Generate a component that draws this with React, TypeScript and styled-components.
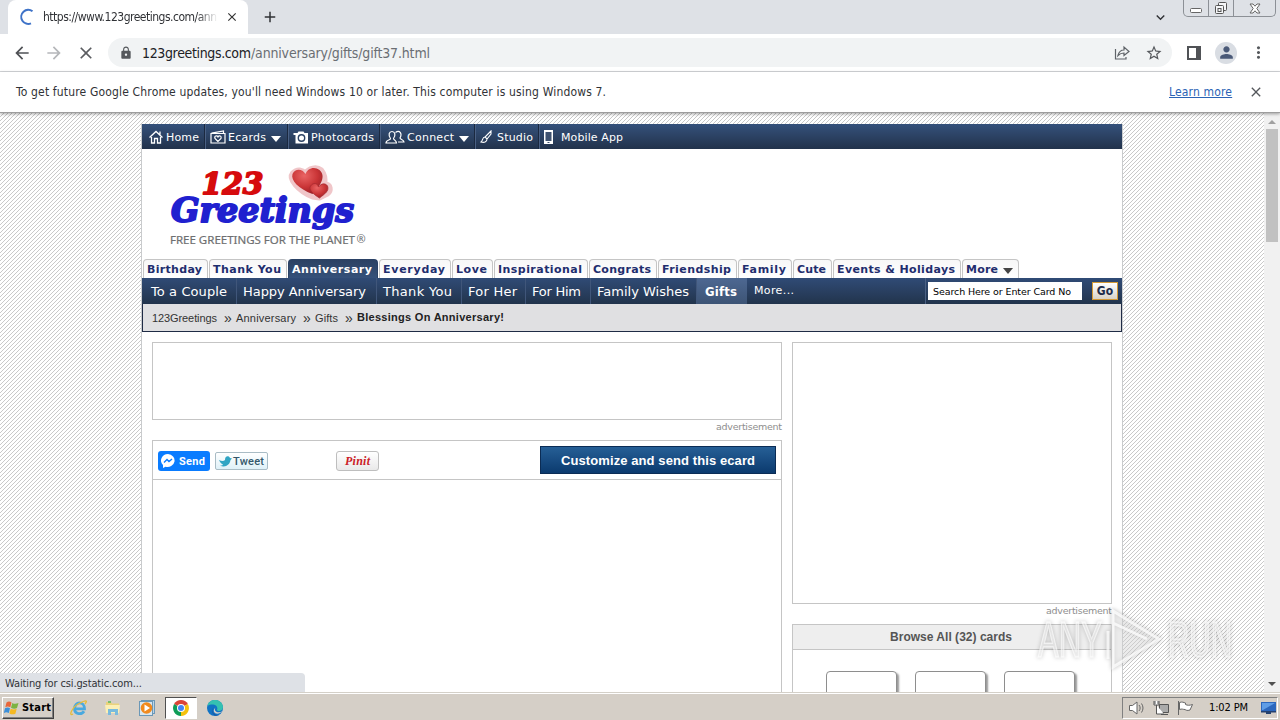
import React, {useLayoutEffect, useRef, useState} from "react";
import styled, {createGlobalStyle} from "styled-components";
import {
    MdAdd,
    MdArrowBack,
    MdArrowForward,
    MdClose,
    MdExpandMore,
    MdLock,
    MdMoreVert,
    MdPerson,
    MdStarBorder,
} from "react-icons/md";

const tahoma = `Tahoma, "DejaVu Sans Condensed", "DejaVu Sans", sans-serif`;
const verdana = `Verdana, "DejaVu Sans", sans-serif`;
const arial = `"Liberation Sans", Arial, sans-serif`;

// spreads the letters so that the text takes exactly the given width
const Fit: React.FC<{width: number; children: string; className?: string}> = ({width, children, className}) => {
    const ref = useRef<HTMLSpanElement>(null);
    const [spacing, setSpacing] = useState(0);

    useLayoutEffect(() => {
        if (!ref.current) return;
        const natural = ref.current.getBoundingClientRect().width - spacing * children.length;
        setSpacing((width - natural) / (children.length - 1));
    }, [width, children]);

    return (
        <FitBox $width={width} className={className}>
            <span ref={ref} style={{letterSpacing: spacing}}>{children}</span>
        </FitBox>
    );
};

const topLinks = [
    {label: "Home", icon: "home", iconWidth: 17, text: 33, width: 62, arrow: false},
    {label: "Ecards", icon: "card", iconWidth: 18, text: 38, width: 83, arrow: true},
    {label: "Photocards", icon: "camera", iconWidth: 18, text: 63, width: 92, arrow: false},
    {label: "Connect", icon: "people", iconWidth: 22, text: 47, width: 95, arrow: true},
    {label: "Studio", icon: "brush", iconWidth: 17, text: 36, width: 64, arrow: false},
    {label: "Mobile App", icon: "phone", iconWidth: 18, text: 62, width: 95, arrow: false},
];

const tabs = [
    {label: "Birthday", text: 55, width: 65},
    {label: "Thank You", text: 68, width: 78},
    {label: "Anniversary", text: 80, width: 90},
    {label: "Everyday", text: 62, width: 72},
    {label: "Love", text: 31, width: 41},
    {label: "Inspirational", text: 84, width: 94},
    {label: "Congrats", text: 58, width: 68},
    {label: "Friendship", text: 69, width: 79},
    {label: "Family", text: 44, width: 54},
    {label: "Cute", text: 29, width: 39},
    {label: "Events & Holidays", text: 118, width: 128},
];

const subLinks = [
    {label: "To a Couple", text: 76, width: 95, pad: 9},
    {label: "Happy Anniversary", text: 123, width: 140, pad: 6},
    {label: "Thank You", text: 69, width: 85, pad: 6},
    {label: "For Her", text: 49, width: 64, pad: 6},
    {label: "For Him", text: 49, width: 65, pad: 6},
    {label: "Family Wishes", text: 92, width: 106, pad: 6},
];

const NavIcon: React.FC<{name: string}> = ({name}) => {
    switch (name) {
        case "home":
            return (
                <svg width="14" height="14" viewBox="0 0 14 14" fill="none" stroke="#fff" strokeWidth="1.3">
                    <path d="M.5 7.500 7 1.500 13.500 7.500M2.500 7V13h3V8.500h3V13h3V7M11 4.500V1.500"/>
                </svg>
            );
        case "card":
            return (
                <svg width="16" height="14" viewBox="0 0 16 14" fill="none" stroke="#fff" strokeWidth="1.2">
                    <path d="M1 3.500h14V13H1zM1.500 3.200 13.500 1v2.200"/>
                    <path d="M8 11.500 5 8.500c-1-2.500 2-3.500 3-1.500 1-2 4-1 3 1.500z"/>
                </svg>
            );
        case "camera":
            return (
                <svg width="16" height="13" viewBox="0 0 16 13">
                    <path fill="#fff" d="M.5 2h4l1-1.500h5L11.500 2h3.500v10.500H2.500V4h-2z"/>
                    <circle cx="8.500" cy="7" r="3.200" fill="#fff" stroke="#2c4365" strokeWidth="1.400"/>
                </svg>
            );
        case "people":
            return (
                <svg width="20" height="14" viewBox="0 0 20 14" fill="none" stroke="#fff" strokeWidth="1.2">
                    <path d="M5.500 8.500C3 5 4 1.500 7 1.500s4 3.500 1.500 7c0 1.500 3 1.500 3 4.500H1c0-3.500 4.500-2.500 4.500-4.500z"/>
                    <path d="M10.500 2.500c4-3 7 1 4.500 5.500 0 1.500 4 1.500 4 4h-6"/>
                </svg>
            );
        case "brush":
            return (
                <svg width="13" height="14" viewBox="0 0 13 14" fill="none" stroke="#fff" strokeWidth="1.1">
                    <path d="M11 1 5 7l2 2 4-5zM5 7c-3 0-2 4-4 5 3 1 6 0 6-3"/>
                </svg>
            );
        default:
            return (
                <svg width="11" height="14" viewBox="0 0 11 14">
                    <path fill="#fff" d="M1 0h9v14H1z"/>
                    <path fill="#3f5270" d="M2.500 2h6v9h-6zM4.500 12h2v1h-2z"/>
                </svg>
            );
    }
};

const Logo: React.FC = () => (
    <svg width="240" height="90" viewBox="0 0 240 90">
        <defs>
            <radialGradient id="heart" cx=".4" cy=".3" r=".8">
                <stop offset="0" stopColor="#ea6464"/>
                <stop offset=".55" stopColor="#c93436"/>
                <stop offset="1" stopColor="#8d1b22"/>
            </radialGradient>
        </defs>
        <g fontFamily="DejaVu Serif, serif" fontWeight="bold" fontStyle="italic" strokeLinejoin="round">
            <text x="44.500" y="34.500" fontSize="30" textLength="62" lengthAdjust="spacingAndGlyphs" fill="#d60b0d"
                  stroke="#d60b0d" strokeWidth="1.800">123</text>
            <text x="14" y="62.500" fontSize="34" textLength="183" lengthAdjust="spacingAndGlyphs" fill="#2020cf"
                  stroke="#2020cf" strokeWidth="2">Greetings</text>
        </g>
        <g strokeLinejoin="round" transform="translate(-1.500 0)">
            <path d="M157 38C143 32 132 20 137 14c5-5 10-3 13 0 3-5 11-7 16-3 4 5 4 10 3 14 7 0 7 7 3 10l-8 4z"
                  fill="#f0c6c9" stroke="#f0c6c9" strokeWidth="5"/>
            <path d="M157 35c-14-5-22-14-20-20 3-6 10-5 13 0 2-6 9-8 14-4 7 6 1 16-7 24z" fill="url(#heart)"/>
            <path d="M164 39c-8-5-11-9-9-12 3-4 7-3 8 1 3-4 7-4 9-1 2 5-3 8-8 12z" fill="url(#heart)"
                  stroke="#a92b31" strokeWidth=".8"/>
        </g>
        <g fontFamily="Noto Sans, Open Sans, sans-serif" fill="#6e6f71">
            <text x="13" y="84.500" fontSize="11" textLength="185" lengthAdjust="spacingAndGlyphs" stroke="#6e6f71"
                  strokeWidth=".2">FREE GREETINGS FOR THE PLANET</text>
            <text x="199.500" y="83.500" fontSize="11">®</text>
        </g>
    </svg>
);

const Watermark: React.FC = () => (
    <WatermarkSvg viewBox="0 0 230 80">
        <g fill="#fff" fillOpacity=".45" stroke="#fff" strokeOpacity=".6" strokeWidth="1.5"
           fontFamily="Liberation Sans, sans-serif" fontSize="50">
            <text x="9" y="58" textLength="64" lengthAdjust="spacingAndGlyphs">ANY</text>
            <text x="139" y="58" textLength="64" lengthAdjust="spacingAndGlyphs">RUN</text>
        </g>
        <path d="M84 12v56l46-28zM79 32v28M84 24l34 16" fill="#fff" fillOpacity=".35" stroke="#fff"
              strokeOpacity=".75" strokeWidth="3"/>
    </WatermarkSvg>
);

export default function App() {
    return (
        <Screen>
            <GlobalStyle/>
            <TabStrip>
                <BrowserTab>
                    <svg width="18" height="18" viewBox="0 0 18 18" fill="none" stroke="#3f73c8" strokeWidth="2">
                        <path d="M13.500 3.300A7 7 0 1 0 12 15.300"/>
                    </svg>
                    <TabTitle><Fit width={174}>https://www.123greetings.com/ann</Fit></TabTitle>
                    <MdClose size={14} color="#333"/>
                </BrowserTab>
                <NewTab><MdAdd size={18}/></NewTab>
                <TabSearch><MdExpandMore size={17}/></TabSearch>
                <WindowButtons>
                    <WindowButton $width={24}>
                        <svg width="13" height="6"><rect x=".5" y=".5" width="11" height="4" rx="1" fill="#fff" stroke="#666"/></svg>
                    </WindowButton>
                    <WindowButton $width={25}>
                        <svg width="14" height="13" fill="#f5f6f8" stroke="#555">
                            <rect x="4.5" y=".5" width="8" height="8" rx="1"/>
                            <rect x="1.5" y="3.5" width="8" height="8" rx="1"/>
                            <rect x="4" y="6.5" width="3" height="3"/>
                        </svg>
                    </WindowButton>
                    <WindowButton $width={42}>
                        <svg width="12" height="11" viewBox="0 0 12 11" fill="#fff" stroke="#666">
                            <path d="M1 1h3l2 2.200L8 1h3L7.800 5.500 11 10H8L6 7.800 4 10H1l3.200-4.500z"/>
                        </svg>
                    </WindowButton>
                </WindowButtons>
            </TabStrip>

            <Toolbar>
                <ToolIcon $color="#4f5155" $gap={12}><MdArrowBack size={20}/></ToolIcon>
                <ToolIcon $color="#b5b7ba" $gap={12}><MdArrowForward size={20}/></ToolIcon>
                <ToolIcon $color="#5a5c60" $gap={12}><MdClose size={20}/></ToolIcon>
                <AddressBar>
                    <MdLock size={14} color="#55585c"/>
                    <Url><Fit width={109}>123greetings.com</Fit><UrlPath width={179}>/anniversary/gifts/gift37.html</UrlPath></Url>
                    <svg width="16" height="16" viewBox="0 0 16 16" fill="none" stroke="#5f6368" strokeWidth="1.2">
                        <path d="M1.500 4v10h10.500v-2M4 10.500c1-4 3-5.500 6-5.500V2l5 4.500-5 4V8C7 8 6 8.500 4 10.500z"/>
                    </svg>
                    <MdStarBorder size={18} color="#55585c"/>
                </AddressBar>
                <SidePanel/>
                <Avatar><MdPerson size={19}/></Avatar>
                <MdMoreVert size={19} color="#55585c"/>
            </Toolbar>

            <InfoBar>
                <Fit width={590}>To get future Google Chrome updates, you'll need Windows 10 or later. This computer is using Windows 7.</Fit>
                <LearnMore width={63}>Learn more</LearnMore>
                <MdClose size={16} color="#55585c"/>
            </InfoBar>

            <Viewport>
                <Page>
                    <TopNav>
                        {topLinks.map((link) => (
                            <TopLink key={link.label} $width={link.width}>
                                <IconSlot $width={link.iconWidth}><NavIcon name={link.icon}/></IconSlot>
                                <Fit width={link.text}>{link.label}</Fit>
                                {link.arrow && <Caret $color="#fff"/>}
                            </TopLink>
                        ))}
                    </TopNav>
                    <LogoArea><Logo/></LogoArea>
                    <CategoryTabs>
                        {tabs.map((tab) => (
                            <CategoryTab key={tab.label} $width={tab.width} $active={tab.label === "Anniversary"}>
                                <Fit width={tab.text}>{tab.label}</Fit>
                            </CategoryTab>
                        ))}
                        <CategoryTab $width={57}>
                            <Fit width={32}>More</Fit>
                            <Caret $color="#444"/>
                        </CategoryTab>
                    </CategoryTabs>
                    <SubNav>
                        {subLinks.map((link) => (
                            <SubLink key={link.label} $width={link.width} $pad={link.pad}>
                                <Fit width={link.text}>{link.label}</Fit>
                            </SubLink>
                        ))}
                        <ActiveSubLink><Fit width={32}>Gifts</Fit></ActiveSubLink>
                        <MoreLink><Fit width={40}>More...</Fit></MoreLink>
                        <SearchArea>
                            <SearchInput><Fit width={138}>Search Here or Enter Card No</Fit></SearchInput>
                            <GoButton>Go</GoButton>
                        </SearchArea>
                    </SubNav>
                    <Breadcrumb>
                        <Fit width={65}>123Greetings</Fit><Chevron>»</Chevron>
                        <Fit width={60}>Anniversary</Fit><Chevron>»</Chevron>
                        <Fit width={23}>Gifts</Fit><Chevron>»</Chevron>
                        <CurrentCrumb width={147}>Blessings On Anniversary!</CurrentCrumb>
                    </Breadcrumb>
                    <Columns>
                        <MainColumn>
                            <AdBox $height={78}/>
                            <AdLabel><Fit width={66}>advertisement</Fit></AdLabel>
                            <CardPanel>
                                <ShareRow>
                                    <SendButton>
                                        <svg width="14" height="14" viewBox="0 0 14 14">
                                            <path fill="#fff" d="M7 0a7 6.500 0 0 0-5 11v3l2.500-1.300A7 6.500 0 1 0 7 0z"/>
                                            <path fill="none" stroke="#0a7cff" strokeWidth="1.400" d="m3 8.500 3-3 2 2 3-2.500"/>
                                        </svg>
                                        <Fit width={26}>Send</Fit>
                                    </SendButton>
                                    <TweetButton>
                                        <svg width="13" height="11" viewBox="0 0 13 11">
                                            <path fill="#30a5c4" d="M0 4c3 1.500 5 1 6 0 0-4.500 4-4.500 5-2l2 .5-1.500 1.500C11 9 6 12 1 9.500c2 0 2.500 0 3-1C2 7.500 1 6 0 4z"/>
                                        </svg>
                                        <Fit width={31}>Tweet</Fit>
                                    </TweetButton>
                                    <PinButton>
                                        <Fit width={25}>Pinit</Fit>
                                    </PinButton>
                                    <CustomizeButton><Fit width={194}>Customize and send this ecard</Fit></CustomizeButton>
                                </ShareRow>
                            </CardPanel>
                        </MainColumn>
                        <SideColumn>
                            <AdBox $height={262}/>
                            <AdLabel><Fit width={66}>advertisement</Fit></AdLabel>
                            <BrowsePanel>
                                <BrowseTitle><Fit width={122}>Browse All (32) cards</Fit></BrowseTitle>
                                <Thumbs>
                                    <Thumb/>
                                    <Thumb/>
                                    <Thumb/>
                                </Thumbs>
                            </BrowsePanel>
                        </SideColumn>
                    </Columns>
                </Page>
                <Scrollbar>
                    <ScrollArrow $up/>
                    <ScrollThumb/>
                    <ScrollArrow/>
                </Scrollbar>
                <StatusBubble><Fit width={137}>Waiting for csi.gstatic.com...</Fit></StatusBubble>
                <Watermark/>
            </Viewport>

            <Taskbar>
                <StartButton>
                    <svg width="16" height="16" viewBox="0 0 16 16">
                        <path fill="#e8663a" d="M2.500 2.500c2-1.500 3.500-1 5 0L6.300 7.300c-2-1-3.300-.800-5 0z"/>
                        <path fill="#7cb342" d="M8.300 3c2 1.200 4 1 6.200 0L13 8c-2 1-4 .8-6-.3z"/>
                        <path fill="#3b8fd9" d="M1 8.300c2-1 3.500-.8 5 0L4.800 13c-2-1-3.500-.8-5 0z"/>
                        <path fill="#f5b921" d="M6.700 8.800c2 1 4 1 6 0l-1.300 4.900c-2 1-4 .8-6-.3z"/>
                    </svg>
                    <Fit width={29}>Start</Fit>
                </StartButton>
                <TaskIcons>
                    <TaskIcon>
                        <svg width="18" height="18" viewBox="0 0 18 18" fill="none">
                            <path d="M4.500 9.800h10C14.500 2 4.500 2 4.500 9.800c0 6 7.500 6 9.500 2.500" stroke="#49a9df" strokeWidth="2.800"/>
                            <path d="M3 15C-2 18 2 8 9 4.500S18 1 15 5" stroke="#e6bc3a" strokeWidth="1.300"/>
                        </svg>
                    </TaskIcon>
                    <TaskIcon>
                        <svg width="18" height="18" viewBox="0 0 18 18">
                            <path fill="#ead27c" d="M2 3h5l1 1.500h7V13H2z"/>
                            <path fill="#7bbf6a" d="M4 2h3v2H4z"/>
                            <path fill="#fbefb5" d="M1 6h15l-1 8H2z"/>
                            <path fill="#79bbdd" d="M4 10h10v6h-3v-3H7v3H4z"/>
                        </svg>
                    </TaskIcon>
                    <TaskIcon>
                        <svg width="18" height="18" viewBox="0 0 18 18">
                            <rect x="3.500" y="1.500" width="13" height="13" fill="#bcd6e8" stroke="#6b98b7"/>
                            <rect x="1.500" y="2.500" width="13" height="14" fill="#d9e7ef" stroke="#6b98b7"/>
                            <circle cx="8.500" cy="9" r="5.800" fill="#f18a1d"/>
                            <path fill="#fff" d="M6.500 5.500v7L12 9z"/>
                        </svg>
                    </TaskIcon>
                    <TaskIcon $active>
                        <svg width="18" height="18" viewBox="0 0 18 18">
                            <path fill="#db4437" d="M9 9 2.100 5a8 8 0 0 1 13.800 0z"/>
                            <path fill="#0f9d58" d="M9 9v8A8 8 0 0 1 2.100 5z"/>
                            <path fill="#f4c20d" d="M9 9l6.900-4A8 8 0 0 1 9 17z"/>
                            <circle cx="9" cy="9" r="4" fill="#fff"/>
                            <circle cx="9" cy="9" r="3" fill="#4285f4"/>
                        </svg>
                    </TaskIcon>
                    <TaskIcon>
                        <svg width="18" height="18" viewBox="0 0 18 18">
                            <circle cx="9" cy="9" r="8" fill="#1173c4"/>
                            <path fill="#35c1b1" d="M1.500 7C3-1 16-1 17 8c0 4-5 5-6 3 2-5-5-7-9.500-4z"/>
                            <path fill="#d4cfc8" d="M9.500 8.500C7 13 13 14.500 16.500 12c-5 6-12 1-7-3.500z"/>
                            <path fill="#1b5aa6" d="M8 8c-4 4 1 9 5 8-5 3-10-4-5-8z"/>
                        </svg>
                    </TaskIcon>
                </TaskIcons>
                <Tray>
                    <svg width="18" height="16" viewBox="0 0 18 16" fill="none" stroke="#666">
                        <path d="M1.500 5.500h3L9 2v12L4.500 10.500h-3z" fill="#fff"/>
                        <path d="M11 5c1.500 2 1.500 4 0 6M13.500 3.500c2 3 2 6 0 9"/>
                    </svg>
                    <svg width="17" height="16" viewBox="0 0 17 16" fill="#fff" stroke="#555">
                        <path d="M6.500 4.500h9v8h-9z" fill="#aaa"/>
                        <path d="M1 1v4h5V1M2 1v3M5 1v3M3.500 5v9H11M8 14.500h7"/>
                    </svg>
                    <svg width="17" height="16" viewBox="0 0 17 16" fill="#fff" stroke="#666">
                        <path d="M1.500 1v14M2.500 2.500c3-1 4 0 6 .5v1.500c2 1 4 1 7 0L13 10c-3 1-4 0-5-.5-2 0-3-1-5.500 0z"/>
                    </svg>
                    <Clock width={39}>1:02 PM</Clock>
                    <svg width="17" height="14" viewBox="0 0 17 14">
                        <path fill="#2c67bd" d="M1 1h15v9.500H1z"/>
                        <path fill="#5f9de6" d="M2 2h13L3 9H2z"/>
                        <path fill="#244170" d="M1 10h15v1.500h-5V13H6v-1.500H1z"/>
                    </svg>
                </Tray>
            </Taskbar>
        </Screen>
    );
}

const GlobalStyle = createGlobalStyle`
    * {
        box-sizing: border-box;
    }

    body {
        margin: 0;
        overflow: hidden;
    }

    svg {
        display: block;
        flex: none;
    }
`;

const FitBox = styled.span<{$width: number}>`
    display: block;
    flex: none;
    width: ${({$width}) => $width}px;
    white-space: pre;
`;

const Screen = styled.div`
    width: 1280px;
    height: 720px;
    display: flex;
    flex-direction: column;
    overflow: hidden;
    background: #fff;
    font-family: ${tahoma};
    font-size: 12px;
    color: #303236;
`;

const TabStrip = styled.header`
    display: flex;
    height: 34px;
    flex: none;
    padding-left: 8px;
    background: #dee1e6;
`;

const BrowserTab = styled.div`
    display: flex;
    align-items: center;
    width: 240px;
    padding-left: 11px;
    background: #fff;
    border-radius: 8px 8px 0 0;
`;

const TabTitle = styled.div`
    width: 175px;
    margin: 0 7px 0 6px;
    mask-image: linear-gradient(90deg, #000 88%, transparent 100%);
`;

const NewTab = styled.div`
    display: flex;
    align-items: center;
    margin-left: 13px;
`;

const TabSearch = styled.div`
    display: flex;
    align-items: center;
    margin-left: auto;
    margin-right: 14px;
`;

const WindowButtons = styled.div`
    display: flex;
    height: 17px;
    margin-right: 4px;
    border: 1px solid #8c9096;
    border-top: 0;
    border-radius: 0 0 5px 5px;
`;

const WindowButton = styled.div<{$width: number}>`
    display: flex;
    align-items: center;
    justify-content: center;
    width: ${({$width}) => $width}px;

    & + & {
        border-left: 1px solid #8c9096;
    }

    &:first-child {
        padding-top: 5px;
    }
`;

const Toolbar = styled.div`
    display: flex;
    align-items: center;
    height: 38px;
    flex: none;
    padding: 0 12px;
    border-bottom: 1px solid #d5d7da;
`;

const ToolIcon = styled.div<{$color: string; $gap: number}>`
    display: flex;
    color: ${({$color}) => $color};
    margin-right: ${({$gap}) => $gap}px;
`;

const AddressBar = styled.div`
    display: flex;
    align-items: center;
    width: 1064px;
    height: 29px;
    padding: 0 9px 0 11px;
    border-radius: 15px;
    background: #f1f3f4;

    & > svg + svg {
        margin-left: 15px;
    }
`;

const Url = styled.div`
    display: flex;
    flex: 1;
    margin-left: 9px;
    font-size: 14px;
    color: #202124;
`;

const UrlPath = styled(Fit)`
    color: #6a6e73;
`;

const SidePanel = styled.div`
    width: 14px;
    height: 14px;
    margin-left: 15px;
    border: 2px solid #505256;
    border-right-width: 5px;
`;

const Avatar = styled.div`
    display: flex;
    align-items: center;
    justify-content: center;
    width: 22px;
    height: 22px;
    margin: 0 12px 0 14px;
    border-radius: 50%;
    background: #d9dde3;
    color: #4b5a78;
`;

const InfoBar = styled.div`
    display: flex;
    align-items: center;
    position: relative;
    z-index: 1;
    height: 41px;
    flex: none;
    padding: 0 16px;
    border-bottom: 1px solid #9d9d9d;
    background: #fff;
    box-shadow: 0 1px 3px rgba(0, 0, 0, .35);
`;

const LearnMore = styled(Fit)`
    margin-left: auto;
    margin-right: 16px;
    color: #2a63b5;
    text-decoration: underline;
`;

const Viewport = styled.main`
    position: relative;
    display: flex;
    height: 579px;
    flex: none;
    padding-left: 141px;
    overflow: hidden;
    background: repeating-linear-gradient(135deg, #c9c9c9 0 .7071px, #fff .7071px 2.8284px);
`;

const Page = styled.div`
    width: 982px;
    height: 568px;
    margin-top: 11px;
    border: 1px solid #c9cbcd;
    border-width: 0 1px;
    background: #fff;
    overflow: hidden;
`;

const TopNav = styled.nav`
    display: flex;
    height: 25px;
    background: linear-gradient(#35517b, #22324b);
    color: #fff;
    font: 11px ${verdana};
`;

const TopLink = styled.a<{$width: number}>`
    display: flex;
    align-items: center;
    width: ${({$width}) => $width}px;
    padding: 1px 0 0 7px;

    &:not(:first-child) {
        padding-left: 5px;
        border-left: 1px solid #1b2940;
        box-shadow: inset 1px 0 #4a6084;
    }

    &:last-child {
        padding-left: 4px;
    }
`;

const IconSlot = styled.span<{$width: number}>`
    width: ${({$width}) => $width}px;
    flex: none;
`;

const Caret = styled.i<{$color: string}>`
    margin-left: 5px;
    margin-top: 3px;
    border: 5.5px solid transparent;
    border-top: 6px solid ${({$color}) => $color};
    border-bottom: 0;
`;

const LogoArea = styled.div`
    height: 110px;
    padding: 10px 0 0 15px;
`;

const CategoryTabs = styled.nav`
    display: flex;
    gap: 1px;
    height: 19px;
    padding-left: 1px;
    font: bold 11px ${verdana};
`;

const CategoryTab = styled.a<{$width: number; $active?: boolean}>`
    display: flex;
    align-items: center;
    width: ${({$width}) => $width}px;
    padding-left: 3px;
    border: 1px solid ${({$active}) => $active ? "#2b4266" : "#c5c5c5"};
    border-bottom: 0;
    border-radius: 4px 4px 0 0;
    background: ${({$active}) => $active ? "linear-gradient(#2c4263, #35517a)" : "linear-gradient(#f7f7f7, #fff)"};
    color: ${({$active}) => $active ? "#fff" : "#1f2e6e"};
`;

const SubNav = styled.nav`
    display: flex;
    height: 26px;
    background: linear-gradient(#304b76, #22344c);
    color: #fff;
    font: 13px ${verdana};
`;

const SubLink = styled.a<{$width: number; $pad: number}>`
    display: flex;
    align-items: center;
    width: ${({$width}) => $width}px;
    padding-left: ${({$pad}) => $pad}px;
    border-right: 1px solid #40567a;
`;

const ActiveSubLink = styled.a`
    display: flex;
    align-items: center;
    width: 50px;
    padding-left: 8px;
    background: linear-gradient(#4d6892, #3d5475);
    font: bold 13px ${tahoma};
`;

const MoreLink = styled.a`
    padding: 6px 0 0 7px;
    font-size: 11px;
`;

const SearchArea = styled.div`
    display: flex;
    align-items: center;
    width: 197px;
    margin-left: auto;
    padding-left: 2px;
    border-left: 1px solid #4b6184;
`;

const SearchInput = styled.div`
    display: flex;
    align-items: center;
    width: 154px;
    height: 18px;
    margin-right: 10px;
    padding-left: 5px;
    background: #fff;
    color: #000;
    font: 9.5px ${verdana};
`;

const GoButton = styled.div`
    width: 26px;
    height: 18px;
    border: 1px solid #d49a35;
    background: linear-gradient(#fff, #d7d3c8);
    color: #1d2c4a;
    text-align: center;
    font: bold 12px/16px ${tahoma};
`;

const Breadcrumb = styled.div`
    display: flex;
    align-items: center;
    height: 28px;
    padding-left: 9px;
    border: 1px solid #1f2b45;
    border-top: 0;
    background: #e0e0e2;
    color: #333;
    font: 11px ${arial};
`;

const Chevron = styled.span`
    width: 19px;
    padding-left: 3px;
    text-align: center;
    font: 14px/14px ${arial};
`;

const CurrentCrumb = styled(Fit)`
    padding-bottom: 2px;
    font-weight: bold;
    color: #222;
`;

const Columns = styled.div`
    display: flex;
    gap: 10px;
    padding: 10px;
`;

const MainColumn = styled.section`
    width: 630px;
`;

const SideColumn = styled.aside`
    width: 320px;
`;

const AdBox = styled.div<{$height: number}>`
    height: ${({$height}) => $height}px;
    border: 1px solid #c5c5c5;
`;

const AdLabel = styled.div`
    display: flex;
    justify-content: flex-end;
    height: 20px;
    color: #8e8e8e;
    font: 9.5px/13px ${verdana};
`;

const CardPanel = styled.div`
    height: 400px;
    border: 1px solid #c5c5c5;
`;

const ShareRow = styled.div`
    display: flex;
    align-items: center;
    height: 39px;
    padding: 0 5px;
    border-bottom: 1px solid #c5c5c5;
`;

const ShareButton = styled.a`
    display: flex;
    align-items: center;
    margin-top: 2px;
    border-radius: 3px;
    font-family: Roboto, ${arial};
    font-size: 11px;
`;

const SendButton = styled(ShareButton)`
    gap: 4px;
    width: 52px;
    height: 20px;
    padding-left: 3px;
    background: #0a7cff;
    color: #fff;
    font-weight: bold;
`;

const TweetButton = styled(ShareButton)`
    gap: 1px;
    width: 53px;
    height: 18px;
    margin-left: 5px;
    padding-left: 3px;
    border: 1px solid #a9bcc5;
    border-radius: 2px;
    background: linear-gradient(#fff, #dff1f8);
    color: #34586b;
    font-weight: 500;
`;

const PinButton = styled(ShareButton)`
    justify-content: center;
    width: 43px;
    height: 20px;
    margin-left: 68px;
    border: 1px solid #bebebe;
    background: linear-gradient(#fff, #e9e9e9);
    color: #cb2027;
    font: italic bold 12px "Liberation Serif", serif;
`;

const CustomizeButton = styled.a`
    display: flex;
    align-items: center;
    justify-content: center;
    width: 236px;
    height: 28px;
    margin-left: auto;
    border: 1px solid #0b2c55;
    background: linear-gradient(#265f96, #0b3a6e);
    color: #fff;
    font: bold 13px ${arial};
`;

const BrowsePanel = styled.div`
    height: 300px;
    border: 1px solid #c5c5c5;
`;

const BrowseTitle = styled.h2`
    display: flex;
    align-items: center;
    justify-content: center;
    height: 25px;
    margin: 0;
    padding-right: 2px;
    border-bottom: 1px solid #c5c5c5;
    background: #eee;
    color: #555;
    font: bold 12px ${arial};
`;

const Thumbs = styled.div`
    display: flex;
    gap: 18px;
    padding: 21px 0 0 33px;
`;

const Thumb = styled.div`
    width: 71px;
    height: 72px;
    border: 1px solid #8e8e8e;
    border-radius: 4px;
    background: #fff;
    box-shadow: 2px 2px 2px #999;
`;

const Scrollbar = styled.div`
    display: flex;
    flex-direction: column;
    align-items: center;
    width: 16px;
    margin-left: auto;
    padding: 7px 0 6px;
    background: #f1f1f1;
`;

const ScrollArrow = styled.i<{$up?: boolean}>`
    border: 4px solid transparent;
    border-${({$up}) => $up ? "bottom" : "top"}-color: ${({$up}) => $up ? "#a0a0a0" : "#505050"};
    border-${({$up}) => $up ? "top" : "bottom"}-width: 0;
    margin-top: ${({$up}) => $up ? "0" : "auto"};
`;

const ScrollThumb = styled.div`
    width: 12px;
    height: 113px;
    margin-top: 5px;
    background: #c1c1c1;
`;

const StatusBubble = styled.div`
    position: absolute;
    left: 0;
    bottom: 0;
    width: 305px;
    height: 19px;
    padding: 3px 0 0 5px;
    border-radius: 0 4px 0 0;
    background: #dee1e6;
    font-size: 11px;
    line-height: 15px;
`;

const WatermarkSvg = styled.svg`
    position: absolute;
    right: 21px;
    bottom: 13px;
    width: 230px;
    height: 80px;
    overflow: visible;
    filter: drop-shadow(0 0 2px rgba(0, 0, 0, .35));
`;

const Taskbar = styled.footer`
    display: flex;
    align-items: center;
    height: 28px;
    flex: none;
    padding: 2px 2px 0;
    border-top: 1px solid #d4d0c8;
    background: #d5cfc7;
    box-shadow: inset 0 1px #fff;
`;

const StartButton = styled.button`
    display: flex;
    align-items: center;
    gap: 2px;
    width: 52px;
    height: 22px;
    margin: 0;
    padding: 0 0 0 1px;
    border: 1px solid #fff;
    border-right-color: #404040;
    border-bottom-color: #404040;
    background: #d5cfc7;
    box-shadow: inset -1px -1px #808080;
    color: #000;
    font: bold 11px ${tahoma};
`;

const TaskIcons = styled.div`
    display: flex;
    gap: 2px;
    margin-left: 9px;
`;

const TaskIcon = styled.div<{$active?: boolean}>`
    display: flex;
    align-items: center;
    justify-content: center;
    width: 32px;
    height: 22px;
    border: 1px solid;
    border-color: ${({$active}) => $active ? "#505050 #fff #fff #505050" : "transparent"};
    background: ${({$active}) => $active ? "#fff" : "transparent"};
`;

const Tray = styled.div`
    display: flex;
    align-items: center;
    gap: 7px;
    width: 156px;
    height: 22px;
    margin-left: auto;
    padding-left: 5px;
    border: 1px solid #808080;
    border-right-color: #fff;
    border-bottom-color: #fff;
`;

const Clock = styled(Fit)`
    margin: 0 5px 0 8px;
    color: #000;
    font-size: 11px;
`;
